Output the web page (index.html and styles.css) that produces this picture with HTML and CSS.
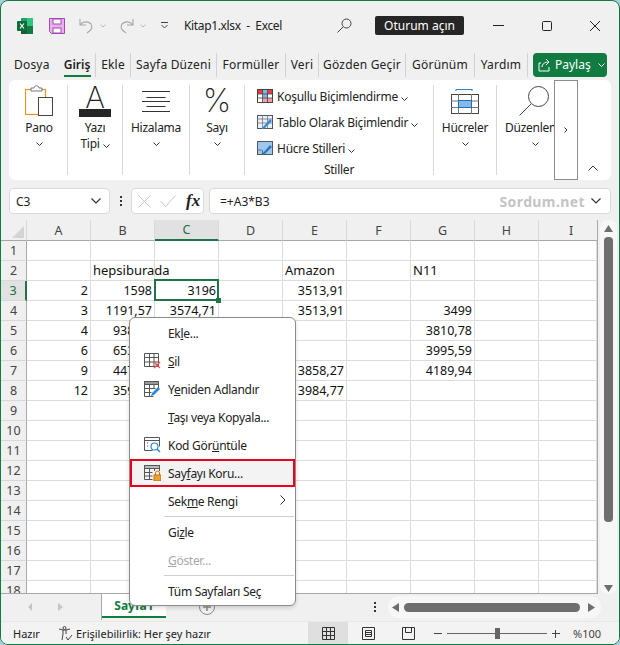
FILE: index.html
```html
<!DOCTYPE html>
<html lang="tr">
<head>
  <meta charset="UTF-8">
  <meta name="viewport" content="width=device-width, initial-scale=1.0">
  <title>Kitap1.xlsx - Excel</title>
  <link rel="stylesheet" href="styles.css">
</head>
<body>
  <div class="window">
    <!-- title bar -->
    <div class="titlebar">
      <svg class="t-logo" width="16" height="16" viewBox="0 0 16 16"><rect x="4" width="12" height="16" rx="1" fill="#21a366"/><rect x="10" width="6" height="8" fill="#33c481"/><rect x="4" y="8" width="6" height="8" fill="#185c37"/><rect x="10" y="8" width="6" height="8" fill="#107c41"/><rect y="3" width="10" height="10" rx="1" fill="#0f6b3a"/><path d="M3 5.5l4 5M7 5.5l-4 5" stroke="#fff" stroke-width="1.2"/></svg>
      <svg class="t-save" width="16" height="16" viewBox="0 0 16 16"><path d="M.5.5h15v15H2.500l-2-2z" fill="#e6b3e6" stroke="#a347ba"/><rect x="4" y="1" width="8" height="5" fill="#fff" stroke="#a347ba"/><rect x="4" y="10" width="8" height="5" fill="#fff" stroke="#a347ba"/></svg>
      <svg class="t-undo" width="15" height="16" viewBox="0 0 15 16" fill="none" stroke="#a6a6a6" stroke-width="1.1"><path d="M1 1v6h6M1 7c3-4 8-4 11-1 2 3 1 6-4 9"/></svg>
      <svg class="t-chev" width="6" height="4" viewBox="0 0 6 4" fill="none" stroke="#b5b5b5"><path d="M.5.5l2.500 2.500 2.500-2.500"/></svg>
      <svg class="t-redo" width="15" height="16" viewBox="0 0 15 16" fill="none" stroke="#a6a6a6" stroke-width="1.1"><path d="M14 1v6H8M14 7c-3-4-8-4-11-1-2 3-1 6 4 9"/></svg>
      <svg class="t-chev" width="6" height="4" viewBox="0 0 6 4" fill="none" stroke="#b5b5b5"><path d="M.5.5l2.500 2.500 2.500-2.500"/></svg>
      <svg class="t-qat" width="7" height="7" viewBox="0 0 7 7" fill="none" stroke="#444"><path d="M0 .5h7M.5 3l3 3 3-3"/></svg>
      <span class="t-name">Kitap1.xlsx&nbsp; -&nbsp; Excel</span>
      <svg class="t-search" width="15" height="15" viewBox="0 0 15 15" fill="none" stroke="#444"><circle cx="9.500" cy="5.500" r="4.500"/><path d="M6 9l-5.500 5.500"/></svg>
      <span class="t-signin">Oturum açın</span>
      <svg class="t-min" width="11" height="1"><rect width="11" height="1" fill="#222"/></svg>
      <svg class="t-max" width="10" height="10" viewBox="0 0 10 10" fill="none" stroke="#222"><rect x=".5" y=".5" width="9" height="9" rx="1"/></svg>
      <svg class="t-close" width="10" height="10" viewBox="0 0 10 10" fill="none" stroke="#222"><path d="M0 0l10 10M10 0L0 10"/></svg>
    </div>

    <!-- tabs -->
    <div class="tabs">
      <span class="tab tab-first">Dosya</span>
      <span class="tab tab-active">Giriş</span>
      <span class="tab tab-ekle">Ekle</span>
      <span class="tab tab-sayfa">Sayfa Düzeni</span>
      <span class="tab tab-formul">Formüller</span>
      <span class="tab tab-veri">Veri</span>
      <span class="tab tab-gozden">Gözden Geçir</span>
      <span class="tab tab-gorunum">Görünüm</span>
      <span class="tab tab-last">Yardım</span>
      <span class="share">
        <svg width="14" height="14" viewBox="0 0 14 14" fill="none" stroke="#fff"><path d="M3 5H1v8h10V9M4 9c0-3 3-5 6-5M8 1l3 3-3 3"/></svg>
        Paylaş
        <svg class="share-chev" width="7" height="4" viewBox="0 0 7 4" fill="none" stroke="#fff"><path d="M.5.500l3 3 3-3"/></svg>
      </span>
    </div>

    <!-- ribbon -->
    <div class="ribbon">
      <div class="group g-pano">
        <div class="g-icon">
          <svg width="28" height="32" viewBox="0 0 28 32" fill="none"><rect x=".5" y="4.500" width="20" height="25" fill="#fff" stroke="#e8961e" stroke-width="1.200"/><path d="M6 6V3h3c0-3 5-3 5 0h3v3z" fill="#fff" stroke="#777"/><rect x="13.500" y="12.500" width="14" height="18" fill="#fff" stroke="#444"/></svg>
        </div>
        <span class="g-label">Pano</span>
        <svg class="chev" width="7" height="4" viewBox="0 0 7 4"><path d="M.5.500l3 3 3-3" fill="none" stroke="#333"/></svg>
      </div>
      <div class="group g-font">
        <div class="g-icon font-icon"><span class="big-a">A</span><i class="font-bar"></i></div>
        <span class="g-label">Yazı</span>
        <span class="g-label">Tipi <svg width="7" height="4" viewBox="0 0 7 4"><path d="M.5.500l3 3 3-3" fill="none" stroke="#333"/></svg></span>
      </div>
      <div class="group g-align">
        <div class="g-icon">
          <svg width="28" height="21" viewBox="0 0 28 21" stroke="#333"><path d="M0 .5h28M4.500 6.500h19M0 10.500h28M4.500 15.500h19M0 20.500h28"/></svg>
        </div>
        <span class="g-label">Hizalama</span>
        <svg class="chev" width="7" height="4" viewBox="0 0 7 4"><path d="M.5.500l3 3 3-3" fill="none" stroke="#333"/></svg>
      </div>
      <div class="group g-num">
        <div class="g-icon"><span class="big-pct">%</span></div>
        <span class="g-label">Sayı</span>
        <svg class="chev" width="7" height="4" viewBox="0 0 7 4"><path d="M.5.500l3 3 3-3" fill="none" stroke="#333"/></svg>
      </div>
      <div class="group g-styles">
        <div class="style-row">
          <svg width="16" height="14" viewBox="0 0 16 14"><rect x=".5" y=".5" width="15" height="13" fill="#fff" stroke="#444"/><rect x="1" y="1" width="14" height="4" fill="#ee3a3a"/><rect x="6" y="1" width="5" height="12" fill="#7eb6e8"/><rect x="6" y="9" width="9" height="4" fill="#f4a0a8"/><path d="M.5 5h15M.5 9h15M5.500 0v14M10.500 0v14" stroke="#444" stroke-width=".8"/></svg>
          <span>Koşullu Biçimlendirme <svg width="7" height="4" viewBox="0 0 7 4"><path d="M.5.500l3 3 3-3" fill="none" stroke="#333"/></svg></span>
        </div>
        <div class="style-row">
          <svg width="16" height="14" viewBox="0 0 16 14"><rect x=".5" y=".5" width="15" height="13" fill="#e6f1fa" stroke="#555"/><path d="M.5 4h15M.5 8h15M5.500 0v14M10.500 0v14" stroke="#777" stroke-width=".8"/><path d="M5 13l8-9 2 2-8 8z" fill="#3c8ad2"/></svg>
          <span>Tablo Olarak Biçimlendir <svg width="7" height="4" viewBox="0 0 7 4"><path d="M.5.500l3 3 3-3" fill="none" stroke="#333"/></svg></span>
        </div>
        <div class="style-row">
          <svg width="16" height="14" viewBox="0 0 16 14"><rect x=".5" y=".5" width="15" height="13" fill="#9cc8ee" stroke="#555"/><path d="M5 13l8-9 2 2-8 8z" fill="#2e78c0"/><path d="M.5 9h4M5.500 9v5" stroke="#555" stroke-width=".8"/></svg>
          <span>Hücre Stilleri <svg width="7" height="4" viewBox="0 0 7 4"><path d="M.5.500l3 3 3-3" fill="none" stroke="#333"/></svg></span>
        </div>
        <span class="styles-label">Stiller</span>
      </div>
      <div class="group g-cells">
        <div class="g-icon">
          <svg width="28" height="26" viewBox="0 0 28 26" fill="none"><path d="M5 .5h16M5 0v2M21 0v2" stroke="#2e86c8" transform="translate(0 1)"/><rect x=".5" y="6.500" width="27" height="19" stroke="#444"/><path d="M0 13h28M0 19.500h28M7.500 6v20M20.500 6v20" stroke="#777"/><rect x="7.500" y="12.500" width="13" height="7" fill="#86bbe8" stroke="#1c6fb4"/></svg>
        </div>
        <span class="g-label">Hücreler</span>
        <svg class="chev" width="7" height="4" viewBox="0 0 7 4"><path d="M.5.500l3 3 3-3" fill="none" stroke="#333"/></svg>
      </div>
      <div class="group g-edit">
        <div class="g-icon">
          <svg width="30" height="30" viewBox="0 0 30 30" fill="none" stroke="#444"><circle cx="19.500" cy="10.500" r="10"/><path d="M12 18L.5 29.500"/></svg>
        </div>
        <span class="g-label">Düzenleme</span>
        <svg class="chev" width="7" height="4" viewBox="0 0 7 4"><path d="M.5.500l3 3 3-3" fill="none" stroke="#333"/></svg>
      </div>
      <div class="overflow-btn"><svg width="4" height="6" viewBox="0 0 4 6"><path d="M.5.500l2.500 2.500-2.500 2.500" fill="none" stroke="#333"/></svg></div>
      <svg class="collapse" width="10" height="6" viewBox="0 0 10 6"><path d="M.5 5.500l4.500-4.500 4.500 4.500" fill="none" stroke="#333"/></svg>
    </div>

    <!-- formula bar -->
    <div class="formula">
      <div class="namebox"><span>C3</span><svg width="10" height="6" viewBox="0 0 10 6"><path d="M.5.500l4.500 4.500 4.500-4.500" fill="none" stroke="#333" stroke-width="1.200"/></svg></div>
      <div class="dots"><i></i><i></i><i></i></div>
      <div class="fxbox">
        <svg width="13" height="13" viewBox="0 0 13 13" fill="none" stroke="#c4c4c4"><path d="M.5.500l12 12M12.500.500l-12 12"/></svg>
        <svg width="16" height="12" viewBox="0 0 16 12" fill="none" stroke="#c4c4c4"><path d="M.5 6l5 5.500L15.500.500"/></svg>
        <span class="fx">fx</span>
      </div>
      <div class="input"><span>=+A3*B3</span><span class="mark">Sordum.net</span><svg width="10" height="6" viewBox="0 0 10 6"><path d="M.5.500l4.500 4.500 4.500-4.500" fill="none" stroke="#333" stroke-width="1.200"/></svg></div>
    </div>

    <!-- sheet -->
    <div class="sheet-wrap">
      <div class="sheet">
        <table class="cells">
          <colgroup><col class="c-head"><col span="8" class="c-col"><col class="c-last"></colgroup>
          <thead>
            <tr><th class="corner"><i></i></th><th>A</th><th>B</th><th class="sel-col">C</th><th>D</th><th>E</th><th>F</th><th>G</th><th>H</th><th class="last-col">I</th></tr>
          </thead>
          <tbody>
            <tr><th>1</th><td></td><td></td><td></td><td></td><td></td><td></td><td></td><td></td><td></td></tr>
            <tr><th>2</th><td></td><td class="txt">hepsiburada</td><td></td><td></td><td class="txt">Amazon</td><td></td><td class="txt">N11</td><td></td><td></td></tr>
            <tr><th class="sel-row">3</th><td>2</td><td>1598</td><td class="current">3196<i class="handle"></i></td><td></td><td>3513,91</td><td></td><td></td><td></td><td></td></tr>
            <tr><th>4</th><td>3</td><td>1191,57</td><td>3574,71</td><td></td><td>3513,91</td><td></td><td>3499</td><td></td><td></td></tr>
            <tr><th>5</th><td>4</td><td>938,50</td><td></td><td></td><td></td><td></td><td>3810,78</td><td></td><td></td></tr>
            <tr><th>6</th><td>6</td><td>653,91</td><td></td><td></td><td></td><td></td><td>3995,59</td><td></td><td></td></tr>
            <tr><th>7</th><td>9</td><td>447,42</td><td></td><td></td><td>3858,27</td><td></td><td>4189,94</td><td></td><td></td></tr>
            <tr><th>8</th><td>12</td><td>359,70</td><td></td><td></td><td>3984,77</td><td></td><td></td><td></td><td></td></tr>
            <tr><th>9</th><td></td><td></td><td></td><td></td><td></td><td></td><td></td><td></td><td></td></tr>
            <tr><th>10</th><td></td><td></td><td></td><td></td><td></td><td></td><td></td><td></td><td></td></tr>
            <tr><th>11</th><td></td><td></td><td></td><td></td><td></td><td></td><td></td><td></td><td></td></tr>
            <tr><th>12</th><td></td><td></td><td></td><td></td><td></td><td></td><td></td><td></td><td></td></tr>
            <tr><th>13</th><td></td><td></td><td></td><td></td><td></td><td></td><td></td><td></td><td></td></tr>
            <tr><th>14</th><td></td><td></td><td></td><td></td><td></td><td></td><td></td><td></td><td></td></tr>
            <tr><th>15</th><td></td><td></td><td></td><td></td><td></td><td></td><td></td><td></td><td></td></tr>
            <tr><th>16</th><td></td><td></td><td></td><td></td><td></td><td></td><td></td><td></td><td></td></tr>
            <tr><th>17</th><td></td><td></td><td></td><td></td><td></td><td></td><td></td><td></td><td></td></tr>
            <tr><th>18</th><td></td><td></td><td></td><td></td><td></td><td></td><td></td><td></td><td></td></tr>
          </tbody>
        </table>
      </div>
      <div class="vscroll">
        <svg width="9" height="7" viewBox="0 0 9 7"><path d="M4.500 0L9 7H0z" fill="#6e6e6e"/></svg>
        <div class="vthumb"></div>
        <svg class="vdown" width="9" height="7" viewBox="0 0 9 7"><path d="M4.500 7L9 0H0z" fill="#6e6e6e"/></svg>
      </div>
    </div>

    <!-- sheet tabs -->
    <div class="sheetbar">
      <div class="nav">
        <svg width="4" height="8" viewBox="0 0 4 8"><path d="M4 0v8L0 4z" fill="#c4c4c4"/></svg>
        <svg width="5" height="8" viewBox="0 0 5 8"><path d="M0 0v8l5-4z" fill="#c4c4c4"/></svg>
      </div>
      <div class="sheet-tab">Sayfa1</div>
      <svg class="plus" width="16" height="16" viewBox="0 0 16 16" fill="none" stroke="#8a8a8a"><circle cx="8" cy="8" r="7.500"/><path d="M8 4v8M4 8h8" stroke-width="1.500"/></svg>
      <div class="dots bar-dots"><i></i><i></i><i></i></div>
      <div class="hscroll">
        <svg width="7" height="9" viewBox="0 0 7 9"><path d="M0 4.500L7 0v9z" fill="#6e6e6e"/></svg>
        <div class="hthumb"></div>
        <svg class="hright" width="7" height="9" viewBox="0 0 7 9"><path d="M7 4.500L0 0v9z" fill="#6e6e6e"/></svg>
      </div>
    </div>

    <!-- status bar -->
    <div class="status">
      <span class="st-ready">Hazır</span>
      <svg class="st-acc" width="15" height="15" viewBox="0 0 15 15" fill="none" stroke="#444"><circle cx="6.500" cy="2" r="1.500"/><path d="M1 3l4 1h3l4-1M5 4v4l-1 6M8 4v4M8 11l2 3 4-5"/></svg>
      <span class="st-acc-text">Erişilebilirlik: Her şey hazır</span>
      <div class="view view-on"><svg width="13" height="13" viewBox="0 0 13 13" fill="none" stroke="#333"><path d="M.5.500h12v12H.5zM.5 4.500h12M.5 8.500h12M4.500.500v12M8.500.500v12"/></svg></div>
      <div class="view"><svg width="13" height="13" viewBox="0 0 13 13" fill="none" stroke="#333"><path d="M.5.500h12v12H.5zM3.500 3.500h6v6h-6zM3.500 5.500h6M3.500 7.500h6"/></svg></div>
      <div class="view"><svg width="13" height="13" viewBox="0 0 13 13" fill="none" stroke="#333"><path d="M.5.500h12v12H.5zM3.500.500v5h6v-5"/></svg></div>
      <span class="zoom-sign zoom-minus"></span>
      <div class="slider"><i></i></div>
      <span class="zoom-sign zoom-plus"></span>
      <span class="zoom-val">%100</span>
    </div>

    <!-- context menu -->
    <div class="menu">
      <div class="mi"><span>Ek<u>l</u>e...</span></div>
      <div class="mi">
        <svg width="17" height="16" viewBox="0 0 17 16" fill="none" stroke="#555"><path d="M.5.500h14v13H.5zM.5 4.500h14M.5 9h14M5.500.500v13M10 .500v13"/><path d="M10 9l6 6M16 9l-6 6" stroke="#e8505a" stroke-width="1.300"/></svg>
        <span><u>S</u>il</span>
      </div>
      <div class="mi">
        <svg width="17" height="16" viewBox="0 0 17 16" fill="none" stroke="#555"><rect x=".5" y=".5" width="14" height="3" fill="#999"/><path d="M.5 3.500v12h9M14.500 3.500V8M.5 7.500h11M.5 11.500h7M5.500 3.500v12M10 3.500V8"/><path d="M7 15l1-3 6-6 2 2-6 6z" fill="#2e86d8" stroke="none"/></svg>
        <span>Y<u>e</u>niden Adlandır</span>
      </div>
      <div class="mi"><span><u>T</u>aşı veya Kopyala...</span></div>
      <div class="mi">
        <svg width="17" height="16" viewBox="0 0 17 16" fill="none" stroke="#555"><path d="M.5 3.500h15M.5.500h15v9M.5.500v13h8"/><path d="M3 6h2M3 9h2" stroke-dasharray="1 1"/><circle cx="10.500" cy="9.500" r="3.500" stroke="#2e86d8" stroke-width="1.200"/><path d="M13 12l3 3" stroke="#2e86d8" stroke-width="1.500"/></svg>
        <span>Kod Gör<u>ü</u>ntüle</span>
      </div>
      <div class="mi mi-mark">
        <svg width="17" height="16" viewBox="0 0 17 16" fill="none" stroke="#555"><rect x=".5" y=".5" width="15" height="3" fill="#bbb"/><path d="M.5 3.500v11h8M15.500 3.500V6M.5 7.500h8M.5 11h8M5.500 3.500v11M10.500 3.500V6"/><rect x="10" y="10" width="7" height="6" fill="#f0a030" stroke="#c87010"/><path d="M11.500 10V8a2 2 0 014 0v2" stroke="#c87010"/></svg>
        <span>Say<u>f</u>ayı Koru...</span>
      </div>
      <div class="mi">
        <span>Sek<u>m</u>e Rengi</span>
        <svg class="mi-arrow" width="6" height="10" viewBox="0 0 6 10"><path d="M.5.500l4.500 4.500-4.500 4.500" fill="none" stroke="#333"/></svg>
      </div>
      <div class="sep"></div>
      <div class="mi"><span>Gi<u>z</u>le</span></div>
      <div class="mi mi-off"><span><u>G</u>öster...</span></div>
      <div class="sep"></div>
      <div class="mi"><span>Tüm Sayfaları Se<u>ç</u></span></div>
    </div>
  </div>
</body>
</html>
```

FILE: styles.css
```css
* {
  box-sizing: border-box;
}

body {
  margin: 0;
  background: #a9cfe0;
  font-family: 'Noto Sans', 'Open Sans', sans-serif;
  font-size: 12px;
  color: #222;
  overflow: hidden;
}

.window {
  position: relative;
  display: flex;
  flex-direction: column;
  width: 620px;
  height: 645px;
  background: #f0f0f0;
  border: 1px solid #107c41;
  border-radius: 8px;
  overflow: hidden;
}

/* title bar */
.titlebar {
  display: flex;
  align-items: center;
  height: 49px;
  flex: none;
}

.t-logo { margin-left: 16px; }
.t-save { margin-left: 16px; }
.t-undo { margin-left: 14px; }
.t-chev { margin-left: 6px; }
.t-redo { margin-left: 13px; }
.t-qat { margin-left: 15px; }

.t-name {
  margin-left: 16px;
  white-space: nowrap;
  letter-spacing: -.35px;
}

.t-search { margin-left: auto; }

.t-signin {
  margin-left: 23px;
  width: 89px;
  height: 19px;
  line-height: 19px;
  text-align: center;
  background: #262626;
  color: #fff;
  border-radius: 2px;
}

.t-min { margin-left: 29px; }
.t-max { margin-left: 38px; }
.t-close { margin-left: 38px; margin-right: 19px; }

/* tabs */
.tabs {
  display: flex;
  align-items: center;
  height: 29px;
  flex: none;
  padding-left: 6px;
}

.tab {
  position: relative;
  flex: none;
  height: 24px;
  line-height: 24px;
  text-align: center;
  letter-spacing: .2px;
  border-right: 1px solid #d2d2d2;
  white-space: nowrap;
}

.tab-first {
  width: 52px;
  padding-left: 7px;
  text-align: left;
  border-right: none;
}

.tab-active {
  width: 37px;
  font-weight: 600;
  letter-spacing: 0;
}

.tab-active::after {
  content: "";
  position: absolute;
  left: 5px;
  right: 4px;
  bottom: 0;
  height: 2px;
  background: #107c41;
}

.tab-ekle { width: 35px; }
.tab-sayfa { width: 86px; }
.tab-formul { width: 69px; }
.tab-veri { width: 33px; }
.tab-gozden { width: 87px; }
.tab-gorunum { width: 69px; }

.tab-last {
  width: 53px;
  margin-right: 5px;
}

.share {
  display: flex;
  align-items: center;
  gap: 3px;
  flex: none;
  width: 74px;
  height: 24px;
  padding-left: 5px;
  background: #107c41;
  color: #fff;
  border-radius: 4px;
}

.share-chev { margin-left: 4px; }

/* ribbon */
.ribbon {
  position: relative;
  display: flex;
  flex: none;
  height: 100px;
  margin: 1px 8px 0;
  padding: 5px 0;
  background: #fff;
  border-radius: 6px;
  overflow: hidden;
  letter-spacing: -.25px;
}

.group {
  display: flex;
  flex-direction: column;
  align-items: center;
  border-right: 1px solid #d8d8d8;
  flex: none;
}

.g-icon {
  display: flex;
  align-items: center;
  justify-content: center;
  height: 32px;
  margin-bottom: 3px;
}

.g-label {
  line-height: 16px;
  white-space: nowrap;
}

.chev { margin-top: 6px; }

.g-pano { width: 59px; padding-left: 2px; }
.g-font { width: 55px; }
.g-align { width: 67px; }
.g-num { width: 55px; }
.g-cells { width: 63px; }

.g-styles {
  width: 189px;
  align-items: flex-start;
  padding-left: 12px;
}

.g-edit {
  width: 100px;
  border-right: none;
  overflow: hidden;
  align-items: flex-start;
  padding-left: 8px;
}

.g-edit .g-icon { margin-left: 14px; }
.g-edit .chev { margin-left: 27px; }

.font-icon {
  flex-direction: column;
  width: 32px;
}

.big-a {
  font-family: 'Inter', sans-serif;
  font-size: 30px;
  font-weight: 200;
  line-height: 24px;
}

.font-bar {
  display: block;
  flex: none;
  width: 32px;
  height: 8px;
  background: #262626;
}

.big-pct {
  font-family: 'Inter', sans-serif;
  font-size: 32px;
  font-weight: 200;
  line-height: 32px;
  letter-spacing: 0;
}

.style-row {
  display: flex;
  align-items: center;
  flex: none;
  gap: 4px;
  height: 26px;
  white-space: nowrap;
}

.style-row:first-child { margin-top: -2px; }

.styles-label {
  align-self: center;
  margin-top: 1px;
  padding-right: 12px;
  line-height: 16px;
}

.overflow-btn {
  position: absolute;
  left: 545px;
  top: 0;
  display: flex;
  align-items: center;
  justify-content: center;
  width: 24px;
  height: 100px;
  background: #fff;
  border: 1px solid #8c8c8c;
}

.collapse {
  position: absolute;
  right: 13px;
  bottom: 9px;
}

/* formula bar */
.formula {
  display: flex;
  flex: none;
  height: 26px;
  margin: 8px 8px 0;
}

.namebox,
.fxbox,
.input {
  display: flex;
  align-items: center;
  height: 26px;
  background: #fff;
  border: 1px solid #dadada;
  border-radius: 4px;
}

.namebox {
  justify-content: space-between;
  width: 101px;
  padding: 0 8px 0 6px;
}

.dots {
  display: flex;
  flex-direction: column;
  justify-content: center;
  gap: 2px;
  width: 21px;
  align-items: center;
}

.dots i {
  width: 2px;
  height: 2px;
  background: #333;
}

.fxbox {
  gap: 9px;
  width: 73px;
  padding-left: 6px;
}

.fx {
  font-family: 'Liberation Serif', serif;
  font-style: italic;
  font-weight: 700;
  font-size: 17px;
  line-height: 20px;
  margin-left: 1px;
}

.input {
  flex: 1;
  margin-left: 5px;
  padding: 0 9px 0 10px;
}

.mark {
  margin-left: auto;
  margin-right: 6px;
  font-size: 14px;
  font-weight: 700;
  color: #c4c4c4;
  letter-spacing: .4px;
}

/* sheet */
.sheet-wrap {
  display: flex;
  flex: none;
  height: 374px;
  margin-top: 6px;
}

.sheet {
  width: 597px;
  height: 374px;
  overflow: hidden;
  background: #f0f0f0;
  border-right: 1px solid #a8a8a8;
  border-bottom: 1px solid #a8a8a8;
}

.cells {
  width: 596px;
  border-collapse: separate;
  border-spacing: 0;
  table-layout: fixed;
  background: #fff;
}

.c-head { width: 26px; }
.c-col { width: 64px; }
.c-last { width: 58px; }

.cells th {
  height: 20px;
  padding: 0;
  font-size: 12.5px;
  font-weight: 400;
  text-align: center;
  color: #444;
  background: #f0f0f0;
  border-right: 1px solid #d8d8d8;
  border-bottom: 1px solid #d8d8d8;
  line-height: 19px;
}

.cells thead th {
  border-bottom: 1px solid #a8a8a8;
}

.cells tbody th {
  border-right: 1px solid #a8a8a8;
}

.cells th.last-col {
  padding-left: 6px;
  border-right: none;
}

.cells td {
  position: relative;
  height: 20px;
  padding: 0 2px 0 0;
  font-size: 12.5px;
  text-align: right;
  line-height: 19px;
  white-space: nowrap;
  border-right: 1px solid #dcdcdc;
  border-bottom: 1px solid #dcdcdc;
  color: #111;
}

.cells td.txt {
  font-size: 13px;
  text-align: left;
  padding: 0 0 0 2px;
}

.corner {
  position: relative;
}

.corner i {
  position: absolute;
  right: 2px;
  bottom: 2px;
  width: 0;
  height: 0;
  border-left: 12px solid transparent;
  border-bottom: 12px solid #d4d4d4;
}

.cells thead th.sel-col {
  background: #e1e1e1;
  color: #1f6e43;
  border-bottom: 2px solid #217346;
}

.cells tbody th.sel-row {
  background: #e1e1e1;
  color: #1f6e43;
  border-right: 2px solid #217346;
}

.cells td.current::after {
  content: "";
  position: absolute;
  left: -1px;
  right: -1px;
  top: -2px;
  bottom: -1px;
  border: 2px solid #217346;
}

.handle {
  position: absolute;
  right: -3px;
  bottom: -3px;
  width: 5px;
  height: 5px;
  background: #217346;
  z-index: 1;
}

.vscroll {
  display: flex;
  flex-direction: column;
  align-items: center;
  width: 17px;
  margin-left: 2px;
  padding-top: 5px;
  background: #f7f7f7;
  border-radius: 8px;
}

.vthumb {
  width: 9px;
  height: 285px;
  margin-top: 5px;
  background: #6e6e6e;
  border-radius: 4px;
}

.vdown { margin-top: auto; margin-bottom: 2px; }

/* sheet tabs */
.sheetbar {
  display: flex;
  align-items: center;
  flex: none;
  height: 26px;
}

.nav {
  display: flex;
  align-items: center;
  gap: 26px;
  width: 101px;
  height: 26px;
  padding-left: 27px;
  border-right: 1px solid #a8a8a8;
}

.sheet-tab {
  width: 64px;
  height: 24px;
  line-height: 24px;
  text-align: center;
  font-weight: 700;
  color: #107c41;
  background: #fff;
  border-bottom: 2px solid #107c41;
  align-self: flex-start;
}

.plus { margin-left: 33px; }

.bar-dots { margin-left: 149px; }

.hscroll {
  display: flex;
  align-items: center;
  gap: 5px;
  width: 213px;
  height: 22px;
  margin-left: 3px;
  padding-left: 4px;
  background: #f7f7f7;
  border-radius: 11px;
}

.hthumb {
  flex: none;
  width: 176px;
  height: 9px;
  background: #6e6e6e;
  border-radius: 5px;
}

.hright { margin-left: 3px; }

/* status bar */
.status {
  display: flex;
  align-items: center;
  flex: none;
  height: 24px;
  margin-top: 1px;
  font-size: 11px;
  background: #f3f3f3;
  border-top: 1px solid #e8e8e8;
}

.st-ready {
  flex: none;
  width: 39px;
  margin-left: 12px;
}

.st-acc { flex: none; margin-left: 6px; }

.st-acc-text {
  flex: none;
  width: 232px;
  margin-left: 3px;
  white-space: nowrap;
}

.view {
  display: flex;
  align-items: center;
  justify-content: center;
  flex: none;
  width: 40px;
  height: 23px;
}

.view-on { background: #dfdfdf; }

.zoom-sign {
  position: relative;
  flex: none;
  width: 8px;
  height: 8px;
  margin-left: 6px;
}

.zoom-sign::before {
  content: "";
  position: absolute;
  left: 0;
  right: 0;
  top: 3px;
  height: 1px;
  background: #444;
}

.zoom-plus::after {
  content: "";
  position: absolute;
  left: 3px;
  top: 0;
  bottom: 0;
  width: 1px;
  background: #444;
}

.zoom-plus { margin-left: 5px; }

.slider {
  position: relative;
  flex: none;
  width: 100px;
  height: 1px;
  margin-left: 5px;
  background: #666;
}

.slider i {
  position: absolute;
  left: 48px;
  top: -5px;
  width: 5px;
  height: 11px;
  background: #666;
}

.zoom-val {
  flex: none;
  margin-left: 13px;
  color: #444;
}

/* context menu */
.menu {
  position: absolute;
  left: 128px;
  top: 316px;
  width: 167px;
  padding-top: 1px;
  background: #fff;
  border: 1px solid #8c8c8c;
  border-radius: 6px;
  box-shadow: 0 2px 4px rgba(0, 0, 0, .15);
  letter-spacing: -.3px;
  z-index: 5;
}

.mi {
  position: relative;
  display: flex;
  align-items: center;
  height: 28px;
  padding-left: 38px;
  white-space: nowrap;
}

.mi svg:first-child {
  position: absolute;
  left: 14px;
  top: 6px;
}

.mi u {
  text-underline-offset: 1px;
}

.mi svg.mi-arrow {
  position: absolute;
  right: 9px;
  top: 8px;
}

.mi-mark {
  background: #f3f3f3;
  outline: 2px solid #e8001c;
  outline-offset: -2px;
}

.mi-off {
  color: #a8a8a8;
}

.sep {
  height: 1px;
  margin: 1px 1px 1px 34px;
  background: #cfcfcf;
}
```
